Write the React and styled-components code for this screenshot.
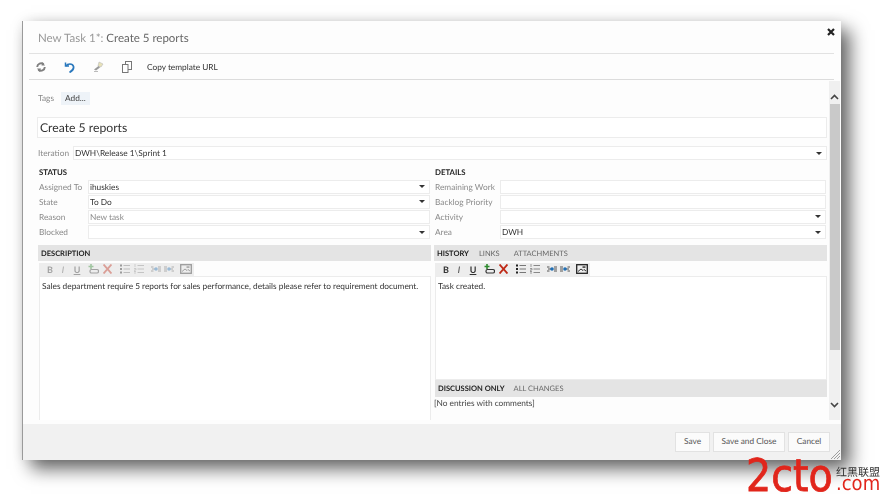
import React from 'react'
import styled, { createGlobalStyle } from 'styled-components'

const Global = createGlobalStyle`
  html, body { margin: 0; padding: 0; background: #fff; }
  body { font-family: Lato, "Open Sans", sans-serif; overflow: hidden; text-rendering: geometricPrecision; }
`

const Arrow = () => <Caret />

function Field({ label, value, muted, select, width }) {
  return (
    <FieldRow>
      <Label $width={width}>{label}</Label>
      <Input $muted={muted}>
        <span>{value}</span>
        {select && <Arrow />}
      </Input>
    </FieldRow>
  )
}

function EditorBar({ disabled }) {
  return (
    <EditorTools $disabled={disabled}>
      <ToolLetter $gap={7}>B</ToolLetter>
      <ToolLetter $gap={5} $italic>I</ToolLetter>
      <ToolLetter $gap={6} $under>U</ToolLetter>
      <Tool $gap={6.5}>
        <svg width="11" height="10" viewBox="0 0 11 10">
          <path d="M3 0v5M.5 2.500h5" stroke="#2e8b2e" strokeWidth="1.600" />
          <rect x="2" y="5.500" width="8.500" height="3.500" rx="1.500" fill="none" stroke="#333" strokeWidth="1.200" />
        </svg>
      </Tool>
      <Tool $gap={4.5}>
        <svg width="9" height="10" viewBox="0 0 9 10">
          <path d="M.5.500l8 9M8.500.500l-8 9" stroke="#bf2a17" strokeWidth="1.900" />
        </svg>
      </Tool>
      <Tool $gap={8}>
        <svg width="10" height="10" viewBox="0 0 10 10">
          <path d="M0 1.500h2M0 5h2M0 8.500h2" stroke="#222" strokeWidth="1.800" />
          <path d="M3.500 1.500H10M3.500 5H10M3.500 8.500H10" stroke="#777" />
        </svg>
      </Tool>
      <Tool $gap={4}>
        <svg width="10" height="10" viewBox="0 0 10 10">
          <path d="M1 0v3M0 4.500h2v1.500H0v1.500h2M0 9h2" stroke="#777" fill="none" strokeWidth=".7" />
          <path d="M3.500 1.500H10M3.500 5H10M3.500 8.500H10" stroke="#888" />
        </svg>
      </Tool>
      <Tool $gap={7}>
        <svg width="10" height="8" viewBox="0 0 10 8">
          <path d="M0 2h2.500M0 6h2.500M7 2h3M7 4h3M7 6h3" stroke="#555" />
          <path d="M1 4h3" stroke="#555" />
          <circle cx="5" cy="4" r="1.800" fill="#1f6fb5" />
        </svg>
      </Tool>
      <Tool $gap={3}>
        <svg width="10" height="8" viewBox="0 0 10 8">
          <path d="M0 2h3M0 4h3M0 6h3M7.500 2h2.500M7.500 6h2.500M6 4h3" stroke="#555" />
          <circle cx="5" cy="4" r="1.800" fill="#1f6fb5" />
        </svg>
      </Tool>
      <Tool $gap={5.5}>
        <svg width="12" height="10" viewBox="0 0 12 10">
          <rect x=".7" y=".7" width="10.600" height="8.600" fill="#eee" stroke="#222" strokeWidth="1.300" />
          <path d="M2 7.500l3-2.500 2 1.500 1-1 2 1.500" fill="none" stroke="#333" />
          <rect x="6.500" y="2.200" width="3" height="1.800" fill="#555" />
        </svg>
      </Tool>
    </EditorTools>
  )
}

export default function App() {
  return (
    <Page>
      <Global />
      <Dialog>
        <Header>
          <Title><TitleMuted>New Task 1*:</TitleMuted> Create 5 reports</Title>
          <Close>
            <svg width="8" height="8" viewBox="0 0 8 8">
              <path d="M1 1l6 6M7 1L1 7" stroke="#222" strokeWidth="2.200" />
            </svg>
          </Close>
        </Header>
        <Toolbar>
          <svg width="10" height="10" viewBox="0 0 10 10">
            <path d="M1.200 5a3.800 3.800 0 0 1 6.400-2.700M8.800 5a3.800 3.800 0 0 1-6.400 2.700" fill="none" stroke="#808080" strokeWidth="1.900" />
            <path d="M6.500 0l2.500 3.500H5.500zM3.500 10L1 6.500h4z" fill="#808080" />
          </svg>
          <svg width="11" height="12" viewBox="0 0 11 12">
            <path d="M1.500 1.500v3.500h3.500" fill="none" stroke="#2a78bd" strokeWidth="1.500" />
            <path d="M2 5c1.500-2.500 6.500-3 7.500 0.500 0.600 2.500-1.500 4.500-4 6" fill="none" stroke="#2a78bd" strokeWidth="1.700" />
          </svg>
          <svg width="11" height="12" viewBox="0 0 11 12">
            <path d="M6 1l4 2-2 3-3-1z" fill="#e8e2b8" stroke="#bbb" strokeWidth=".6" />
            <path d="M5.500 5L1 8.500l2 1L7 6.500z" fill="#9a9a9a" />
            <path d="M1 10.500h4" stroke="#bbb" />
          </svg>
          <svg width="10" height="12" viewBox="0 0 10 12">
            <rect x="3.500" y=".5" width="6" height="8" fill="#fff" stroke="#777" />
            <rect x=".5" y="3.500" width="5.500" height="8" fill="#fff" stroke="#777" />
          </svg>
          <ToolText>Copy template URL</ToolText>
        </Toolbar>
        <Body>
          <Content>
            <TagsRow>
              <Label as="span" $width={23}>Tags</Label>
              <AddTag>Add...</AddTag>
            </TagsRow>
            <TitleInput>Create 5 reports</TitleInput>
            <IterationRow>
              <Label $width={35}>Iteration</Label>
              <Input>
                <span>DWH\Release 1\Sprint 1</span>
                <Arrow />
              </Input>
            </IterationRow>
            <Columns>
              <Column>
                <SectionTitle>STATUS</SectionTitle>
                <Field label="Assigned To" value="ihuskies" select width={49} />
                <Field label="State" value="To Do" select width={49} />
                <Field label="Reason" value="New task" muted width={49} />
                <Field label="Blocked" select width={49} />
              </Column>
              <Column $right>
                <SectionTitle>DETAILS</SectionTitle>
                <Field label="Remaining Work" width={65} />
                <Field label="Backlog Priority" width={65} />
                <Field label="Activity" select width={65} />
                <Field label="Area" value="DWH" select width={65} />
              </Column>
            </Columns>
            <Panels>
              <Panel>
                <PanelHead>
                  <Tab $active>DESCRIPTION</Tab>
                </PanelHead>
                <EditorBar disabled />
                <Editor $grow>
                  Sales department require 5 reports for sales performance, details please refer to requirement document.
                </Editor>
              </Panel>
              <Panel>
                <PanelHead>
                  <Tab $active>HISTORY</Tab>
                  <Tab $gap={10}>LINKS</Tab>
                  <Tab $gap={14}>ATTACHMENTS</Tab>
                </PanelHead>
                <EditorBar />
                <Editor $history>Task created.</Editor>
                <SubHead>
                  <Tab $active>DISCUSSION ONLY</Tab>
                  <Tab $gap={9}>ALL CHANGES</Tab>
                </SubHead>
                <NoEntries>[No entries with comments]</NoEntries>
              </Panel>
            </Panels>
          </Content>
          <ScrollBar>
            <svg width="9" height="6" viewBox="0 0 9 6">
              <path d="M1 5l3.500-3.500L8 5" fill="none" stroke="#444" strokeWidth="1.600" />
            </svg>
            <Thumb />
            <svg width="9" height="6" viewBox="0 0 9 6">
              <path d="M1 1l3.500 3.500L8 1" fill="none" stroke="#444" strokeWidth="1.600" />
            </svg>
          </ScrollBar>
        </Body>
        <Footer>
          <Button $width={35}>Save</Button>
          <Button $width={72}>Save and Close</Button>
          <Button $width={42}>Cancel</Button>
          <Grip>
            <svg width="9" height="9" viewBox="0 0 9 9">
              <path d="M0 9l9-9M3 9l6-6M6 9l3-3" stroke="#888" strokeWidth=".8" />
            </svg>
          </Grip>
        </Footer>
      </Dialog>
      <Watermark>
        <BigMark>2cto</BigMark>
        <MarkSide>
          <MarkCn>红黑联盟</MarkCn>
          <MarkCom>.com</MarkCom>
        </MarkSide>
      </Watermark>
    </Page>
  )
}

const Page = styled.div`
  position: relative;
  width: 883px;
  height: 502px;
  padding: 21px 0 0 22px;
  box-sizing: border-box;
  overflow: hidden;
  background: #fff;
`
const Dialog = styled.div`
  width: 819px;
  height: 439px;
  box-sizing: border-box;
  display: flex;
  flex-direction: column;
  background: #fdfdfd;
  border-left: 1px solid #9a9a9a;
  box-shadow: 9px 9px 17px rgba(0, 0, 0, 0.6), 0 0 14px rgba(0, 0, 0, 0.08);
  color: #333;
  filter: blur(0.3px);
`
const Header = styled.div`
  margin: 0 7px 0 6px;
  padding: 2px 0 0 9px;
  height: 30px;
  display: flex;
  align-items: center;
  justify-content: space-between;
  border-bottom: 1px solid #e2e2e2;
  flex-shrink: 0;
`
const Title = styled.div`
  font-size: 11.500px;
  color: #666;
`
const TitleMuted = styled.span`
  color: #999;
`
const Close = styled.div`
  display: flex;
  margin: -13px -1px 0 0;
`
const Toolbar = styled.div`
  height: 26px;
  margin: 0 7px 0 6px;
  padding: 1px 0 0 7px;
  box-sizing: border-box;
  display: flex;
  align-items: center;
  gap: 18px;
  border-bottom: 1px solid #dcdcdc;
  flex-shrink: 0;
`
const ToolText = styled.span`
  font-size: 8.300px;
  color: #333;
  margin-left: -3px;
`
const Body = styled.div`
  flex: 1;
  display: flex;
  min-height: 0;
  padding-top: 1px;
`
const Content = styled.div`
  flex: 1;
  min-width: 0;
  padding: 0 2px 4px 15px;
  display: flex;
  flex-direction: column;
`
const TagsRow = styled.div`
  height: 34px;
  padding-bottom: 2px;
  flex-shrink: 0;
  display: flex;
  align-items: center;
`
const Label = styled.label`
  font-size: 8.300px;
  color: #8a8a8a;
  ${p => p.$width && `width: ${p.$width}px; flex-shrink: 0;`}
`
const AddTag = styled.span`
  font-size: 8.300px;
  color: #444;
  background: #eef3f8;
  padding: 1px 4px 1px;
  line-height: 11px;
`
const TitleInput = styled.div`
  height: 19px;
  line-height: 19px;
  border: 1px solid #ececec;
  background: #fff;
  padding-left: 2px;
  margin-left: -1px;
  font-size: 12.200px;
  color: #333;
  flex-shrink: 0;
`
const IterationRow = styled.div`
  margin-top: 8px;
  display: flex;
  align-items: center;
  flex-shrink: 0;
`
const Input = styled.div`
  flex: 1;
  min-width: 0;
  height: 12px;
  border: 1px solid #ececec;
  background: #fff;
  padding: 0 4px 0 1px;
  display: flex;
  align-items: center;
  justify-content: space-between;
  font-size: 8.300px;
  color: ${p => (p.$muted ? '#8a8a8a' : '#333')};
`
const Caret = styled.i`
  width: 0;
  height: 0;
  border-left: 3px solid transparent;
  border-right: 3px solid transparent;
  border-top: 3px solid #333;
`
const Columns = styled.div`
  display: grid;
  grid-template-columns: 392px 1fr;
  column-gap: 5px;
  margin-top: 7px;
  flex-shrink: 0;
`
const Column = styled.div`
  display: flex;
  flex-direction: column;
  padding-left: ${p => (p.$right ? '0' : '1px')};
  padding-right: ${p => (p.$right ? '1px' : '0')};
`
const SectionTitle = styled.div`
  font-size: 7.800px;
  font-weight: 700;
  color: #222;
  height: 12px;
  line-height: 11px;
`
const FieldRow = styled.div`
  height: 15.200px;
  display: flex;
  align-items: center;
`
const Panels = styled.div`
  flex: 1;
  min-height: 0;
  margin-top: 5px;
  display: grid;
  grid-template-columns: 393px 1fr;
  column-gap: 3px;
`
const Panel = styled.div`
  display: flex;
  flex-direction: column;
  min-height: 0;
`
const PanelHead = styled.div`
  height: 16px;
  box-sizing: border-box;
  padding: 1px 0 0 3px;
  background: #e4e4e4;
  display: flex;
  align-items: center;
  gap: 11px;
  flex-shrink: 0;
`
const Tab = styled.span`
  font-size: 7.500px;
  font-weight: ${p => (p.$active ? 700 : 400)};
  color: ${p => (p.$active ? '#222' : '#666')};
  ${p => p.$gap && `margin-left: ${p.$gap - 11}px;`}
`
const EditorTools = styled.div`
  height: 13px;
  width: 155px;
  margin: 2px 0 0 1px;
  box-sizing: border-box;
  background: #ededed;
  display: flex;
  align-items: center;
  flex-shrink: 0;
  & > * { opacity: ${p => (p.$disabled ? 0.4 : 1)}; }
`
const Tool = styled.span`
  display: flex;
  margin-left: ${p => p.$gap}px;
`
const ToolLetter = styled.span`
  width: 8px;
  margin-left: ${p => p.$gap}px;
  text-align: center;
  font-size: 9px;
  font-weight: ${p => (p.$italic ? 400 : 700)};
  font-style: ${p => (p.$italic ? 'italic' : 'normal')};
  text-decoration: ${p => (p.$under ? 'underline' : 'none')};
  color: #333;
`
const Editor = styled.div`
  ${p => (p.$grow ? 'flex: 1;' : '')}
  ${p => (p.$history ? 'height: 95px; flex-shrink: 0;' : '')}
  margin-left: 1px;
  border: 1px solid #ececec;
  border-bottom: ${p => (p.$grow ? 'none' : '1px solid #ececec')};
  background: #fff;
  padding: 4px 2px 3px;
  font-size: 8.300px;
  line-height: 11px;
  color: #333;
  white-space: nowrap;
`
const SubHead = styled(PanelHead)`
  margin-left: 1px;
  height: 17px;
  flex-shrink: 0;
`
const NoEntries = styled.div`
  font-size: 8.300px;
  color: #444;
  padding-top: 1px;
`
const ScrollBar = styled.div`
  width: 11px;
  margin: 0 1px 4px 0;
  background: #f0f0f0;
  display: flex;
  flex-direction: column;
  align-items: center;
  padding-top: 13px;
  flex-shrink: 0;
  box-sizing: border-box;
  svg { flex-shrink: 0; }
`
const Thumb = styled.div`
  width: 10px;
  height: 246px;
  margin: 4px 0 52px;
  background: #c9c9c9;
`
const Footer = styled.div`
  position: relative;
  height: 36px;
  flex-shrink: 0;
  background: #f1f1f1;
  display: flex;
  align-items: center;
  justify-content: flex-end;
  gap: 3px;
  padding: 0 11px 0 0;
`
const Button = styled.div`
  width: ${p => p.$width}px;
  height: 20px;
  line-height: 17px;
  box-sizing: border-box;
  text-align: center;
  border: 1.500px solid #e2e2e2;
  background: #fbfbfb;
  font-size: 8.300px;
  color: #555;
`
const Grip = styled.div`
  position: absolute;
  right: 1px;
  bottom: 1px;
  display: flex;
`
const Watermark = styled.div`
  position: absolute;
  left: 746px;
  top: 451px;
  display: flex;
  color: #e1251b;
  align-items: flex-start;
`
const BigMark = styled.span`
  font-family: "DejaVu Sans", sans-serif;
  font-size: 45px;
  line-height: 50px;
  -webkit-text-stroke: 0.8px #e1251b;
  display: inline-block;
  width: 89px;
  transform: scaleX(0.88);
  transform-origin: left;
`
const MarkSide = styled.div`
  display: flex;
  flex-direction: column;
  padding-top: 15px;
  margin-left: 1px;
`
const MarkCn = styled.span`
  font-family: "Noto Sans CJK SC", sans-serif;
  font-size: 11px;
  line-height: 12px;
  color: #333;
  white-space: nowrap;
`
const MarkCom = styled.span`
  font-family: "DejaVu Sans", sans-serif;
  font-size: 20px;
  line-height: 10px;
  transform: scaleX(0.9);
  transform-origin: left;
`
